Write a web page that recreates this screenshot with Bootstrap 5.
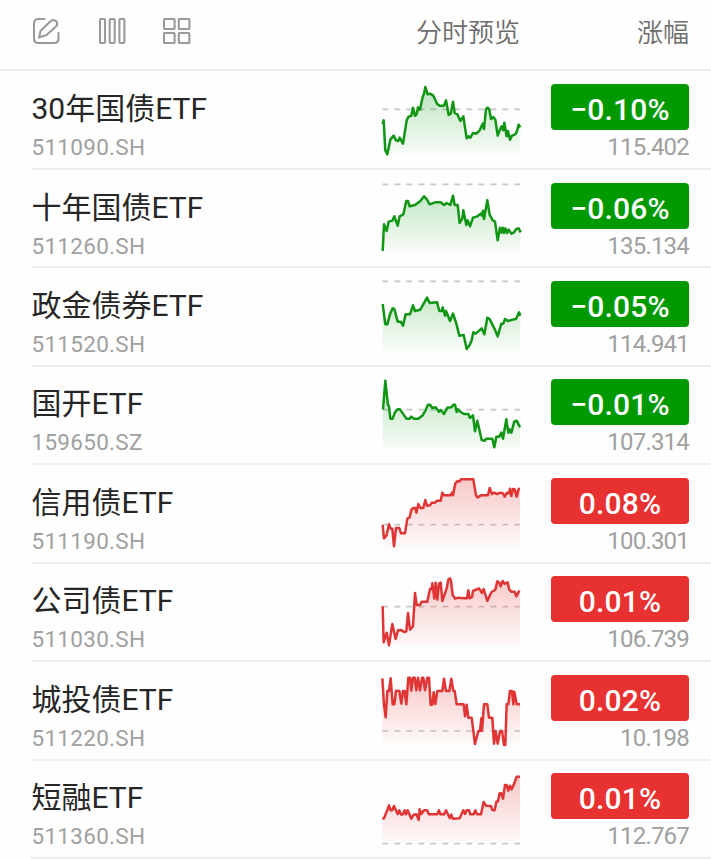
<!DOCTYPE html>
<html lang="zh-CN">
<head>
<meta charset="utf-8">
<meta name="viewport" content="width=device-width, initial-scale=1">
<title>债券ETF</title>
<link href="https://cdn.jsdelivr.net/npm/bootstrap@5.3.0/dist/css/bootstrap.min.css" rel="stylesheet">
<style>
body{font-family:Roboto,"Noto Sans CJK SC",sans-serif;background:#fefefe;height:859px;overflow:hidden}
.topbar{height:71px;border-bottom:2px solid #efefef;padding:0 22px 8px 32px}
.topbar svg{width:28px;height:28px;fill:none;stroke:#999;stroke-width:2.1;stroke-linejoin:round;stroke-linecap:round}
.tools{gap:37.5px;width:338px}
.head-label{font-family:"Noto Sans CJK SC",sans-serif;font-size:26px;line-height:30px;color:#6c6c6c;font-weight:350}
.quotes{padding-top:.5px}
.quote{height:98.45px;margin-left:31px;border-bottom:2px solid #efefef;padding-right:21px}
.info{width:339px;padding:16.6px 0 0 .5px}
.title{font-size:30px;line-height:42px;color:#262626;font-weight:400}
.code{font-size:22.5px;line-height:28px;color:#a0a0a0;letter-spacing:.28px;margin-top:3px}
.spark{width:165px;height:90px;margin-top:3px}
.values{width:138px;padding-top:12.6px;margin-left:16px}
.rate{height:46px;border-radius:4px;font-size:30px;line-height:51px;font-weight:500;color:#fff;letter-spacing:.2px}
.price{font-size:24px;line-height:28px;color:#a0a0a0;letter-spacing:-.8px;margin-top:3px}
.fall{background:#090}.rise{background:#e83131}
</style>
<script src="https://cdn.jsdelivr.net/npm/bootstrap@5.3.0/dist/js/bootstrap.bundle.min.js"></script>
</head>
<body>
<header class="topbar d-flex align-items-center">
  <div class="tools d-flex align-items-center">
    <svg viewBox="0 0 28 28"><path d="M12.500 2H6.500Q2 2 2 6.500V21.500Q2 26 6.500 26H22Q26.500 26 26.500 21.500V16M7 20.500L8.500 14 18.500 4.300Q20.500 2.300 23 3.500 26.500 5.500 24.500 9L14.500 18Z"/></svg>
    <svg viewBox="0 0 28 28"><rect x="2" y="2" width="5" height="24" rx="1"/><rect x="11.700" y="2" width="5" height="24" rx="1"/><rect x="21.400" y="2" width="5" height="24" rx="1"/></svg>
    <svg viewBox="0 0 28 28"><rect x="1" y="2" width="10.600" height="10" rx=".8"/><rect x="15.800" y="2" width="10.600" height="10" rx=".8"/><rect x="1" y="16" width="10.600" height="10" rx=".8"/><rect x="15.800" y="16" width="10.600" height="10" rx=".8"/></svg>
  </div>
  <div class="head-label text-end flex-shrink-0" style="width:150px">分时预览</div>
  <div class="head-label ms-auto">涨幅</div>
</header>
<main id="list" class="quotes"></main>
<script>
const quotes=[
["30年国债ETF","511090.SH","−0.10%","115.402",103,"38,148 41,136 46,226 52,238 61,194 71,182 78,196 85,198 89,188 99,206 110,136 115,126 124,122 129,98 135,122 140,118 144,97 150,104 157,70 162,56 166,36 173,58 180,56 190,62 201,86 209,92 222,92 228,76 236,120 242,116 249,80 254,114 262,118 271,138 280,124 290,190 296,184 301,188 309,174 319,176 329,166 338,146 342,162 348,102 353,98 358,104 363,132 370,126 376,134 383,182 389,166 395,154 400,166 403,143 410,184 414,168 420,194 426,182 436,178 441,168 446,149 451,157"],
["十年国债ETF","511260.SH","−0.06%","135.134",34,"38,234 42,154 50,174 56,146 67,143 73,130 83,158 89,130 100,124 109,84 114,84 119,100 135,96 151,84 162,70 170,78 179,94 195,88 212,88 222,96 230,90 241,96 249,68 254,96 263,96 269,150 277,136 280,112 289,156 293,142 300,160 309,134 322,130 332,122 336,128 339,113 342,138 352,82 359,125 367,140 375,146 383,202 390,164 395,179 398,164 402,180 406,166 411,180 416,170 424,182 432,178 439,168 446,166 452,178"],
["政金债券ETF","511520.SH","−0.05%","114.941",31,"38,99 46,160 52,160 60,130 68,112 73,114 83,152 92,152 99,164 107,130 120,130 129,103 135,120 151,116 161,98 171,80 179,96 201,94 208,120 215,120 218,109 225,134 228,120 240,150 249,128 259,158 268,194 281,192 290,234 299,222 305,208 310,184 317,188 335,172 343,190 352,140 359,144 373,172 383,196 394,158 400,158 405,144 414,150 431,145 438,144 447,124 451,134"],
["国开ETF","159650.SZ","−0.01%","107.314",119,"39,118 46,32 54,106 57,108 61,146 68,146 75,127 83,118 90,118 109,146 119,146 124,140 131,146 145,146 158,136 167,120 174,104 180,104 187,114 197,112 207,125 212,120 222,132 232,113 244,112 250,104 255,104 260,126 264,118 272,126 282,132 295,132 300,144 309,136 315,184 322,152 335,210 344,212 349,206 367,206 373,232 379,200 388,200 394,188 399,206 409,148 415,188 419,178 424,188 433,154 440,152 450,172"],
["信用债ETF","511190.SH","0.08%","100.301",170,"38,171 42,211 49,203 54,182 57,169 62,182 67,182 72,235 78,180 88,180 93,196 105,196 112,152 119,148 124,126 130,120 136,120 139,134 145,108 151,120 160,120 166,96 171,113 180,112 185,104 195,104 201,98 212,98 217,74 222,82 241,82 246,74 249,82 256,46 263,39 269,40 273,34 310,34 318,82 323,88 333,82 354,82 359,60 366,78 373,74 380,78 392,74 399,76 404,86 411,74 417,76 420,62 424,84 429,63 434,64 440,86 446,63 450,62"],
["公司债ETF","511030.SH","0.01%","106.739",119,"38,118 41,226 50,197 57,235 67,171 77,216 84,190 94,189 102,195 109,193 114,138 120,188 129,178 135,78 140,114 150,114 155,104 172,104 180,66 185,67 187,49 193,95 197,47 202,98 207,50 212,47 217,102 230,64 235,38 240,34 243,42 248,84 256,95 265,92 283,94 291,94 295,70 299,94 306,90 309,72 327,64 336,78 341,66 352,102 364,76 376,68 382,43 388,48 392,58 398,42 404,50 413,46 418,68 424,74 434,74 439,88 446,74 450,72"],
["城投债ETF","511220.SH","0.02%","10.198",198,"37,40 42,118 47,157 52,78 57,78 62,40 68,118 73,118 78,77 88,78 94,116 99,78 104,78 109,118 115,38 120,38 124,77 129,38 134,38 139,76 144,38 150,76 156,38 160,38 165,76 172,38 177,38 182,119 187,119 191,82 196,117 202,78 217,78 222,41 228,78 238,78 244,41 250,77 254,78 260,118 281,118 285,154 290,119 295,158 305,158 315,237 325,198 330,198 334,160 336,197 342,118 352,118 357,158 367,158 372,236 377,198 383,236 390,198 396,198 402,240 406,240 410,118 415,118 420,78 426,78 430,118 433,80 440,118 450,118"],
["短融ETF","511360.SH","0.01%","112.767",239,"37,164 42,163 52,138 57,124 62,139 67,138 72,126 83,150 88,139 93,152 98,151 104,139 108,151 113,139 124,164 131,152 139,151 146,168 149,136 154,150 162,139 171,139 177,151 201,151 207,139 211,151 222,151 228,139 239,162 244,152 248,164 269,163 280,139 285,150 290,139 297,139 301,151 311,151 316,139 321,151 333,151 341,114 348,125 363,126 367,138 374,139 379,113 384,112 389,88 394,88 399,104 405,63 410,63 415,80 420,65 425,76 433,58 440,38 450,38"]];
document.getElementById("list").innerHTML=quotes.map(([n,c,r,p,base,pts],i)=>{
const down=r.startsWith("−"),col=down?"#109614":"#e03535",fill=down?"#2cab30":"#ed5555";
return `<section class="quote d-flex"><div class="info flex-shrink-0"><div class="title">${n}</div><div class="code">${c}</div></div>
<svg class="spark flex-shrink-0" viewBox="0 0 495 270"><defs><linearGradient id="g${i}" x1="0" y1="34" x2="0" y2="236" gradientUnits="userSpaceOnUse"><stop stop-color="${fill}" stop-opacity=".32"/><stop offset="1" stop-color="${fill}" stop-opacity=".03"/></linearGradient></defs>
<path d="M37 ${base}H450" fill="none" stroke="#c8c8c8" stroke-width="5" stroke-dasharray="18 18"/>
<polygon points="37,236 ${pts} 450,236" fill="url(#g${i})"/><polyline points="${pts}" fill="none" stroke="${col}" stroke-width="7.500" stroke-linejoin="round"/></svg>
<div class="values"><div class="rate text-center ${down?"fall":"rise"}">${r}</div><div class="price text-end">${p}</div></div></section>`}).join("");
</script>
</body>
</html>
